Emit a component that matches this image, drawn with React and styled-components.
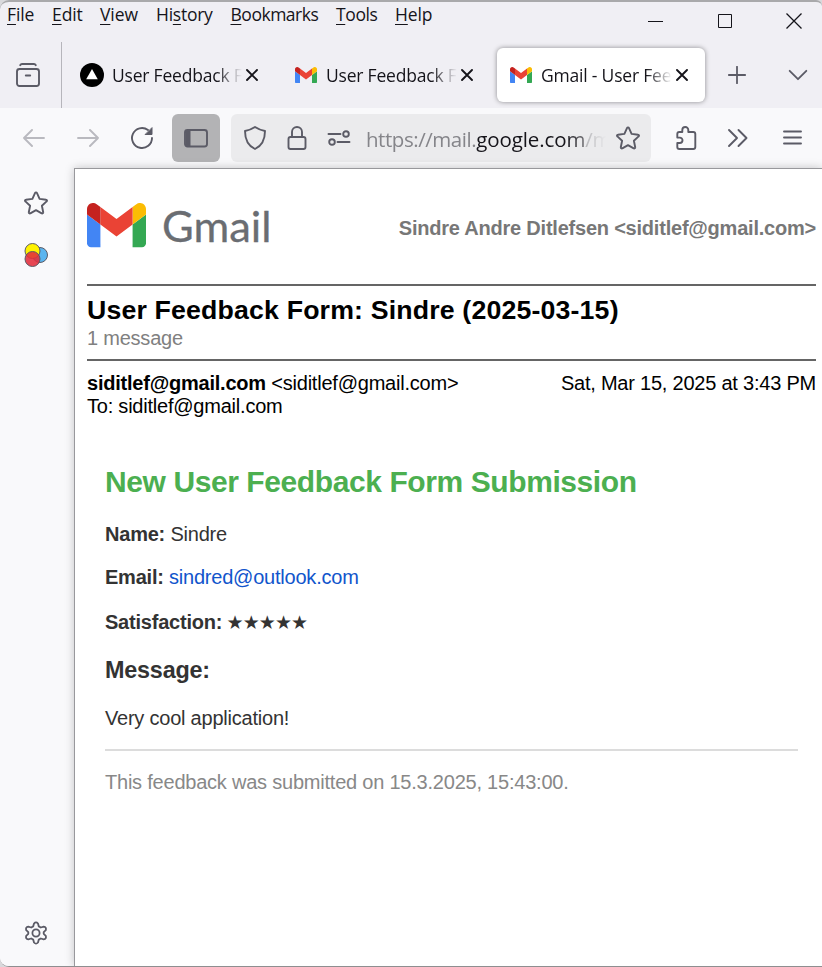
import React from 'react';
import styled, { createGlobalStyle } from 'styled-components';

const Global = createGlobalStyle`
  * { box-sizing: border-box; }
  body { margin: 0; background: #d9d9dc; overflow: hidden; }
`;

const ui = `"Open Sans", "Noto Sans", sans-serif`;
const mail = `"Liberation Sans", Arial, sans-serif`;

const Window = styled.div`
  width: 822px;
  height: 967px;
  display: flex;
  flex-direction: column;
  overflow: hidden;
  background: #f0eff4;
  border-top: 2px solid #a9a9ab;
  border-bottom: 1px solid #8e8e90;
  border-radius: 9px 6px 0 9px;
  font-family: ${ui};
  color: #15141a;
`;

const MenuBar = styled.div`
  height: 40px;
  flex: none;
  display: flex;
  justify-content: space-between;
`;
const Menus = styled.div`
  display: flex;
  padding-left: 7px;
  height: 26px;
`;
const MenuItem = styled.span`
  width: ${p => p.$w}px;
  flex: none;
  font-size: 17.5px;
  line-height: 24px;
  letter-spacing: ${p => p.$ls || 0}px;
  white-space: nowrap;
  u { text-decoration-thickness: 1px; text-underline-offset: 3px; }
`;
const Controls = styled.div`
  display: flex;
  width: 201px;
  flex: none;
  height: 38px;
`;
const Control = styled.div`
  width: 69px;
  flex: none;
  display: flex;
  align-items: center;
  justify-content: center;
`;

const TabStrip = styled.div`
  height: 66px;
  flex: none;
  display: flex;
`;
const ViewButton = styled.div`
  width: 62px;
  flex: none;
  border-right: 1px solid #b6b5bb;
  display: flex;
  align-items: center;
  padding-left: 16px;
`;
const Tabs = styled.div`
  display: flex;
  gap: 7px;
  padding: 6px 8px 6px 5px;
`;
const Tab = styled.div`
  width: 208px;
  height: 54px;
  display: flex;
  align-items: center;
  padding: 0 17px 0 13px;
  border-radius: 6px;
  background: ${p => (p.$active ? '#fff' : 'transparent')};
  box-shadow: ${p => (p.$active ? '0 0 5px rgba(0,0,0,.42)' : 'none')};
`;
const TabLabel = styled.span`
  flex: 1;
  margin-left: ${p => p.$gap || 9}px;
  margin-right: ${p => p.$end || 4}px;
  overflow: hidden;
  white-space: nowrap;
  font-size: 17.5px;
  line-height: 26px;
  letter-spacing: -0.2px;
  mask-image: linear-gradient(to right, #000 calc(100% - 26px), transparent 100%);
`;
const StripButton = styled.div`
  width: 48px;
  flex: none;
  margin-right: 13px;
  display: flex;
  align-items: center;
  justify-content: center;
`;

const Toolbar = styled.div`
  height: 60px;
  flex: none;
  display: flex;
  align-items: center;
  gap: 6px;
  padding: 0 6px 0 10px;
  background: #f9f9fb;
`;
const ToolButton = styled.div`
  width: 48px;
  height: 48px;
  flex: none;
  display: flex;
  align-items: center;
  justify-content: center;
  border-radius: 6px;
  background: ${p => (p.$on ? '#b3b3b5' : 'transparent')};
  opacity: ${p => (p.$dim ? 0.4 : 1)};
`;
const UrlBar = styled.div`
  width: 420px;
  height: 48px;
  flex: none;
  margin: 0 4px 0 5px;
  padding: 0 11px 0 12px;
  display: flex;
  align-items: center;
  gap: 18px;
  border-radius: 6px;
  background: #ebebed;
`;
const Url = styled.span`
  width: 240px;
  margin: 2px -8px 0 -3px;
  flex: none;
  overflow: hidden;
  white-space: nowrap;
  font-size: 20.5px;
  line-height: 32px;
  letter-spacing: -0.45px;
  color: #85858a;
  mask-image: linear-gradient(to right, #000 calc(100% - 40px), transparent 100%);
  b { font-weight: 400; color: #15141a; letter-spacing: -0.1px; }
`;

const Main = styled.div`
  flex: 1;
  min-height: 0;
  display: flex;
`;
const Sidebar = styled.div`
  width: 74px;
  flex: none;
  display: flex;
  flex-direction: column;
  align-items: center;
  padding: 23px 3px 21px 0;
  gap: 28px;
  background: #f9f9fb;
`;
const Spacer = styled.div`flex: 1;`;
const Page = styled.div`
  flex: 1;
  min-width: 0;
  border-top: 1px solid #98989c;
  border-left: 1px solid #98989c;
  box-shadow: 0 0 9px rgba(0, 0, 0, .22);
  background: #fff;
  padding: 0 6px 0 12px;
  font-family: ${mail};
  font-size: 20px;
  line-height: 23px;
  color: #000;
`;
const MailHeader = styled.div`
  height: 117px;
  padding-bottom: 2px;
  display: flex;
  justify-content: space-between;
  align-items: center;
  border-bottom: 2px solid #656565;
`;
const Logo = styled.div`
  display: flex;
  align-items: center;
  gap: 16px;
`;
const Text = styled.div`
  font-size: ${p => p.$size || 20}px;
  font-weight: ${p => (p.$bold ? 700 : 400)};
  color: ${p => p.$color || 'inherit'};
  letter-spacing: ${p => p.$ls ?? -0.22}px;
  line-height: ${p => p.$lh || 23}px;
  white-space: nowrap;
  margin-top: ${p => p.$top || 0}px;
`;
const Span = styled.span`
  font-weight: ${p => (p.$bold ? 700 : 400)};
  color: ${p => p.$color || 'inherit'};
`;
const Subject = styled.div`
  height: 75px;
  padding-top: 8px;
  border-bottom: 2px solid #656565;
`;
const Row = styled.div`
  display: flex;
  justify-content: space-between;
  padding-top: 11px;
`;
const Body = styled.div`
  padding: 46px 18px 0;
  color: #333;
`;
const Stars = styled.span`
  font-family: "DejaVu Sans", sans-serif;
  font-size: 19px;
  line-height: 20px;
  letter-spacing: -0.9px;
  margin-left: -1px;
`;
const Rule = styled.div`
  height: 2px;
  margin-top: 19px;
  background: #dcdcdc;
`;

const Icon = ({ s = 24, children, c = '#5b5b66', w = 1.9 }) => (
  <svg width={s} height={s} viewBox="0 0 24 24" fill="none" stroke={c} strokeWidth={w}
    strokeLinecap="round" strokeLinejoin="round">{children}</svg>
);

const GmailMark = ({ w }) => (
  <svg width={w} height={w * 0.75} viewBox="52 42 88 66">
    <path fill="#4285f4" d="M58 108h14V74L52 59v43c0 3.32 2.69 6 6 6" />
    <path fill="#34a853" d="M120 108h14c3.32 0 6-2.69 6-6V59l-20 15" />
    <path fill="#fbbc04" d="M120 48v26l20-15v-8c0-7.42-8.47-11.65-14.4-7.2" />
    <path fill="#ea4335" d="M72 74V48l24 18 24-18v26L96 92" />
    <path fill="#c5221f" d="M52 51v8l20 15V48l-5.6-4.2c-5.94-4.45-14.4-.22-14.4 7.2" />
  </svg>
);

const Wordmark = () => (
  <svg width="112" height="50" viewBox="0 0 112 50">
    <text x="0" y="40.5" textLength="109.5" lengthAdjust="spacingAndGlyphs" fontFamily="Lato, sans-serif"
      fontSize="42.5" fill="#6a6d72" stroke="#6a6d72" strokeWidth=".3">Gmail</text>
  </svg>
);

const CloseX = () => (
  <svg width="12" height="12" viewBox="0 0 12 12" stroke="#15141a" strokeWidth="1.9" strokeLinecap="round">
    <path d="M1 1l10 10M11 1L1 11" />
  </svg>
);

const StarPath = () => (
  <path d="M11.1 1.9a1 1 0 0 1 1.8 0l2.7 6 6.5.8a.95.95 0 0 1 .5 1.700l-4.700 4.400 1.300 6.400a1 1 0 0 1-1.500 1.100L12 19.100l-5.700 3.200a1 1 0 0 1-1.500-1.100l1.300-6.400-4.700-4.400a.95.95 0 0 1 .5-1.700l6.500-.8z" />
);

const menus = [
  ['F', 'ile', 45, -0.1], ['E', 'dit', 48, -0.1], ['V', 'iew', 56, -0.1], ['Hi', 'story', 74.5, -0.25],
  ['B', 'ookmarks', 105.5, -0.48], ['T', 'ools', 59, -0.4], ['H', 'elp', 50, -0.1],
];

export default function App() {
  return (
    <>
      <Global />
      <Window>
        <MenuBar>
          <Menus>
            {menus.map(([a, b, w, ls]) => (
              <MenuItem key={b} $w={w} $ls={ls}>
                {a === 'Hi' ? <>Hi<u>s</u>tory</> : <><u>{a}</u>{b}</>}
              </MenuItem>
            ))}
          </Menus>
          <Controls>
            <Control><svg width="15" height="15" stroke="#15141a"><path d="M0 7.500h15" /></svg></Control>
            <Control><svg width="14" height="14" fill="none" stroke="#15141a"><path d="M.5.5h13v13H.5z" /></svg></Control>
            <Control><svg width="16" height="16" stroke="#15141a" strokeWidth="1.3"><path d="M.5.5l15 15M15.500.5l-15 15" /></svg></Control>
          </Controls>
        </MenuBar>

        <TabStrip>
          <ViewButton>
            <Icon><path d="M4.200 2.200c.4-.8 1-1.200 1.800-1.200h12c.8 0 1.400.4 1.800 1.200" /><rect x="1" y="6" width="22" height="17" rx="2.500" /><path d="M9.800 12.500h4.400" /></Icon>
          </ViewButton>
          <Tabs>
            <Tab>
              <svg width="24" height="24"><circle cx="12" cy="12" r="12" /><path d="M12 6l5.800 10.200H6.200z" fill="#fff" /></svg>
              <TabLabel $gap={8}>User Feedback Form</TabLabel><CloseX />
            </Tab>
            <Tab>
              <GmailMark w={22} />
              <TabLabel>User Feedback Form</TabLabel><CloseX />
            </Tab>
            <Tab $active>
              <GmailMark w={22} />
              <TabLabel>Gmail - User Feedback</TabLabel><CloseX />
            </Tab>
          </Tabs>
          <StripButton><Icon s={18} w={2.4}><path d="M12 1v22M1 12h22" /></Icon></StripButton>
          <StripButton><Icon s={20} w={2.2}><path d="M2 7l10 10L22 7" /></Icon></StripButton>
        </TabStrip>

        <Toolbar>
          <ToolButton $dim><Icon><path d="M22 12H2M10 4l-8 8 8 8" /></Icon></ToolButton>
          <ToolButton $dim><Icon><path d="M2 12h20M14 4l8 8-8 8" /></Icon></ToolButton>
          <ToolButton><Icon><path d="M22 12A10 10 0 1 1 18 4" /><path d="M22 2v6.500h-6.500z" fill="#5b5b66" strokeWidth="1" /></Icon></ToolButton>
          <ToolButton $on><Icon><rect x="1" y="4" width="22" height="16.500" rx="2.500" /><path d="M2 4h4.500v16.500H2z" fill="#5b5b66" stroke="none" /></Icon></ToolButton>
          <UrlBar>
            <Icon><path d="M12 1c-3 2-6 3.200-10 4 0 8 2.500 14.500 10 18 7.500-3.500 10-10 10-18-4-.8-7-2-10-4z" /></Icon>
            <Icon><rect x="3.500" y="11" width="17" height="12" rx="2" /><path d="M7 11V6a5 5 0 0 1 10 0v5" /></Icon>
            <Icon><path d="M1.500 8h12M10.500 16h12" /><circle cx="19" cy="8" r="2.800" /><circle cx="5" cy="16" r="2.800" /></Icon>
            <Url>https://mail.<b>google.com</b>/mail/u/0</Url>
            <Icon><StarPath /></Icon>
          </UrlBar>
          <ToolButton><Icon><path d="M9.300 6V4a3 3 0 0 1 6 0v2h5a2 2 0 0 1 2 2v13a2 2 0 0 1-2 2h-14a2 2 0 0 1-2-2v-4h2.500a2.700 2.700 0 0 0 0-5.400H4.300V8a2 2 0 0 1 2-2z" /></Icon></ToolButton>
          <ToolButton><Icon><path d="M2 4l8 8-8 8M11.500 4l8 8-8 8" /></Icon></ToolButton>
          <ToolButton><Icon><path d="M3 5.500h17M3 11.500h17M3 17.500h17" /></Icon></ToolButton>
        </Toolbar>

        <Main>
          <Sidebar>
            <Icon><StarPath /></Icon>
            <svg width="24" height="24" viewBox="0 0 24 24" stroke="#5b5b66">
              <circle cx="16" cy="12" r="7.500" fill="#5bb5ef" />
              <circle cx="8.500" cy="8" r="7.500" fill="#fff200" />
              <circle cx="8.500" cy="16" r="7.500" fill="#e22c3a" fillOpacity=".88" />
            </svg>
            <Spacer />
            <Icon w={1.8}>
              <circle cx="12" cy="12" r="3.600" />
              <path d="M10 2.500Q12 .2 14 2.500L14.800 5.400 16.800 6.500 19.700 5.700Q22.700 6.200 21.800 9.200L19.700 11.200V12.800L21.800 14.800Q22.700 17.800 19.700 18.300L16.800 17.500 14.800 18.600 14 21.500Q12 23.800 10 21.500L9.200 18.600 7.200 17.500 4.300 18.300Q1.300 17.800 2.200 14.800L4.300 12.800V11.200L2.200 9.200Q1.300 6.200 4.300 5.700L7.200 6.500 9.200 5.400Z" />
            </Icon>
          </Sidebar>
          <Page>
            <MailHeader>
              <Logo><GmailMark w={59} /><Wordmark /></Logo>
              <Text $bold $color="#777" $top={5}>Sindre Andre Ditlefsen &lt;siditlef@gmail.com&gt;</Text>
            </MailHeader>
            <Subject>
              <Text $bold $size={26.7} $lh={32} $ls={0.17}>User Feedback Form: Sindre (2025-03-15)</Text>
              <Text $color="#808080" $top={1}>1 message</Text>
            </Subject>
            <Row>
              <Text><Span $bold>siditlef@gmail.com</Span> <Span>&lt;siditlef@gmail.com&gt;</Span></Text>
              <Text>Sat, Mar 15, 2025 at 3:43 PM</Text>
            </Row>
            <Text>To: siditlef@gmail.com</Text>
            <Body>
              <Text $bold $size={30} $lh={36} $ls={-0.41} $color="#4caf50">New User Feedback Form Submission</Text>
              <Text $top={23}><Span $bold>Name:</Span> Sindre</Text>
              <Text $top={20}><Span $bold>Email:</Span> <Span $color="#1155cc">sindred@outlook.com</Span></Text>
              <Text $top={22}><Span $bold>Satisfaction:</Span> <Stars>★★★★★</Stars></Text>
              <Text $top={22} $bold $size={23.4} $lh={28}>Message:</Text>
              <Text $top={23}>Very cool application!</Text>
              <Rule />
              <Text $top={20} $color="#888">This feedback was submitted on 15.3.2025, 15:43:00.</Text>
            </Body>
          </Page>
        </Main>
      </Window>
    </>
  );
}
